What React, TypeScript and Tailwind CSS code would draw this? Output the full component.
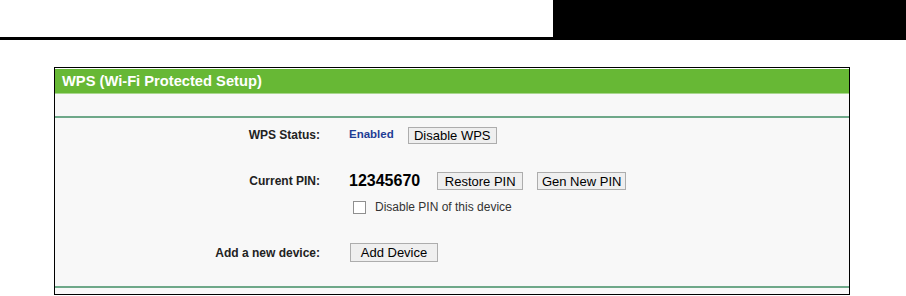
function Btn({ label, w, h }: { label: string; w: string; h: string }) {
  return (
    <button
      className={`${w} ${h} flex items-center justify-center border border-[#adadad] bg-[#efefef] text-[13px] leading-none text-black`}
    >
      {label}
    </button>
  );
}

function Row({ label, children, className }: { label: string; children: React.ReactNode; className?: string }) {
  return (
    <div className={`flex items-center ${className ?? ""}`}>
      <div className="w-[265px] text-right text-[12px] font-bold text-[#222]">{label}</div>
      <div className="ml-[29px] flex items-center">{children}</div>
    </div>
  );
}

export default function App() {
  return (
    <div className="w-[906px] h-[296px] overflow-hidden bg-white font-['Liberation_Sans',Arial,sans-serif]">
      <div className="flex h-10">
        <div className="flex-1 border-b-[3px] border-black"></div>
        <div className="w-[353px] bg-black"></div>
      </div>

      <div className="ml-[54px] mt-[27px] w-[796px] border border-black bg-[#f8f8f8]">
        <div className="bg-white pt-px">
          <div className="flex h-[25px] items-center border-b border-[#a9d68f] bg-[#67b835] pl-[7px] text-[14.7px] font-bold text-white">
            WPS (Wi-Fi Protected Setup)
          </div>
        </div>
        <div className="h-[24px] border-b-2 border-[#6ea889]"></div>

        <div className="pt-[8px] pb-[24px]">
          <Row label="WPS Status:" className="h-[18px]">
            <span className="text-[11.5px] font-bold text-[#1f3d95]">Enabled</span>
            <div className="ml-[14px]">
              <Btn label="Disable WPS" w="w-[89px]" h="h-[17px]" />
            </div>
          </Row>

          <Row label="Current PIN:" className="mt-[28px] h-[18px]">
            <span className="text-[16px] font-bold text-black">12345670</span>
            <div className="ml-[17px]">
              <Btn label="Restore PIN" w="w-[86px]" h="h-[18px]" />
            </div>
            <div className="ml-[14px]">
              <Btn label="Gen New PIN" w="w-[89px]" h="h-[18px]" />
            </div>
          </Row>

          <div className="mt-[10px] flex h-[14px] items-center pl-[298px]">
            <span className="h-[13px] w-[13px] border border-[#8f8f8f] bg-white"></span>
            <span className="ml-[9px] text-[12px] text-[#333]">Disable PIN of this device</span>
          </div>

          <Row label="Add a new device:" className="mt-[29px] h-[19px]">
            <div className="ml-px">
              <Btn label="Add Device" w="w-[88px]" h="h-[19px]" />
            </div>
          </Row>
        </div>

        <div className="h-[8px] border-t-2 border-[#6ea889]"></div>
      </div>
    </div>
  );
}
